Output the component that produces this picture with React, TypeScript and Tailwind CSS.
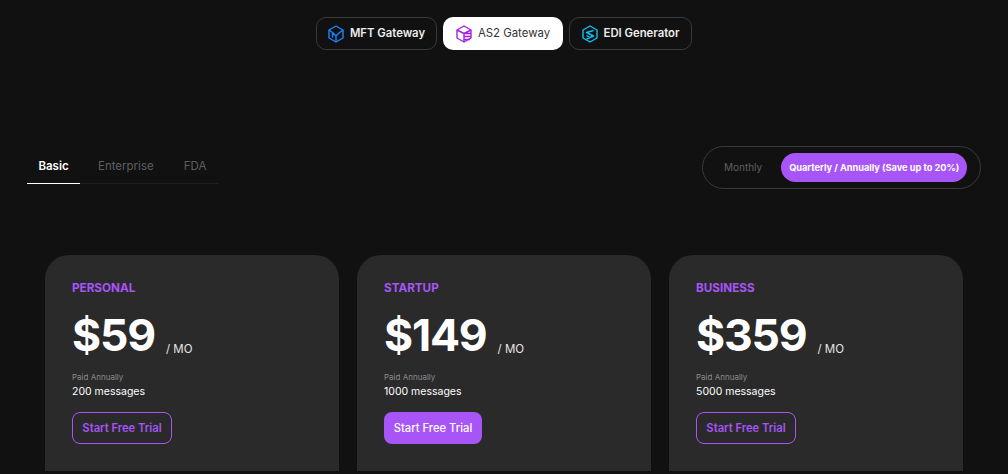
import type { ReactNode } from "react";

function BoxIcon({ color, children }: { color: string; children: ReactNode }) {
  return (
    <svg width="16" height="18" viewBox="0 0 16 18" fill="none" stroke={color} strokeWidth="1.4" strokeLinejoin="round">
      <path d="M8 1 15 5V13L8 17 1 13V5Z" />
      {children}
    </svg>
  );
}

const products = [
  {
    name: "MFT Gateway",
    color: "#1a86ff",
    active: false,
    width: "w-[121px]",
    lines: <path d="M1 5 4.5 7.5 8 11 11 8 15 5M4.5 7.5V12.5M8 11V17" />,
  },
  {
    name: "AS2 Gateway",
    color: "#a31fe6",
    active: true,
    width: "w-[120px]",
    lines: <path d="M1 5 8 8.5 15 5M8 8.5V17M8 8.5H15M8 11.5H15M8 14.5H14" />,
  },
  {
    name: "EDI Generator",
    color: "#0fc0f5",
    active: false,
    width: "w-[123px]",
    lines: <path d="M11.5 5.5 4.5 7.5 11.5 11 4.5 14M4.5 10.5 8 12.5" />,
  },
];

const plans = [
  { title: "PERSONAL", price: "$59", messages: "200 messages", filled: false },
  { title: "STARTUP", price: "$149", messages: "1000 messages", filled: true },
  { title: "BUSINESS", price: "$359", messages: "5000 messages", filled: false },
];

function PlanCard({ title, price, messages, filled }: (typeof plans)[number]) {
  return (
    <div className="h-[216px] w-[294px] rounded-t-[24px] bg-[#2a2a2a] pl-[27px] pt-[26px]">
      <div className="text-[11.7px] font-bold leading-[14px] text-[#a855f7]">{title}</div>
      <div className="mt-[12px] flex items-end">
        <span className="text-[44.5px] font-bold leading-[56px] tracking-[-1.2px] text-white">{price}</span>
        <span className="mb-[6px] ml-[11px] text-[11.5px] leading-[16px] text-[#e5e5e5]">/ MO</span>
      </div>
      <div className="mt-[8px] text-[8px] leading-[12px] text-[#8a8a8a]">Paid Annually</div>
      <div className="mt-[2px] text-[10.5px] leading-[14px] text-white">{messages}</div>
      {filled ? (
        <button className="mt-[13px] flex h-[32px] w-[98px] items-center justify-center rounded-[8px] bg-[#a855f7] text-[11.2px] font-medium text-white">
          Start Free Trial
        </button>
      ) : (
        <button className="mt-[13px] flex h-[32px] w-[100px] items-center justify-center rounded-[8px] border border-[#a855f7] text-[11.2px] font-semibold text-[#a855f7]">
          Start Free Trial
        </button>
      )}
    </div>
  );
}

export default function App() {
  return (
    <div className="h-[474px] overflow-hidden bg-[#111111] font-['Inter',sans-serif]">
      <div className="flex justify-center gap-[6px] pt-[17px]">
        {products.map((item) => (
          <div
            key={item.name}
            className={
              item.active
                ? `flex h-[33px] ${item.width} items-center justify-center gap-[6px] rounded-[10px] bg-white text-[11.4px] text-[#333333]`
                : `flex h-[33px] ${item.width} items-center justify-center gap-[6px] rounded-[10px] border border-[#3a3a3a] text-[11.3px] font-semibold text-[#eeeeee]`
            }
          >
            <BoxIcon color={item.color}>{item.lines}</BoxIcon>
            {item.name}
          </div>
        ))}
      </div>

      <div className="mt-[96px] flex items-start justify-between pl-[27px] pr-[27px]">
        <div className="mt-[4px] flex h-[34px] w-[192px] border-b border-[#1f1f1f] text-[11.5px]">
          <div className="-mb-px h-[34px] w-[53px] border-b border-white pt-[8px] text-center font-semibold text-white">Basic</div>
          <div className="ml-[18px] pt-[8px] text-[#5f5f5f]">Enterprise</div>
          <div className="ml-[30px] pt-[8px] text-[#5f5f5f]">FDA</div>
        </div>
        <div className="flex h-[43px] w-[279px] items-center rounded-full border border-[#3a3a3a] pl-[21px]">
          <span className="text-[10px] text-[#5f5f5f]">Monthly</span>
          <span className="ml-[19px] flex h-[29px] w-[186px] items-center justify-center rounded-full bg-[#a855f7] text-[9.2px] font-bold text-white">
            Quarterly / Annually (Save up to 20%)
          </span>
        </div>
      </div>

      <div className="mt-[66px] flex gap-[18px] pl-[45px]">
        {plans.map((plan) => (
          <PlanCard key={plan.title} {...plan} />
        ))}
      </div>
    </div>
  );
}
